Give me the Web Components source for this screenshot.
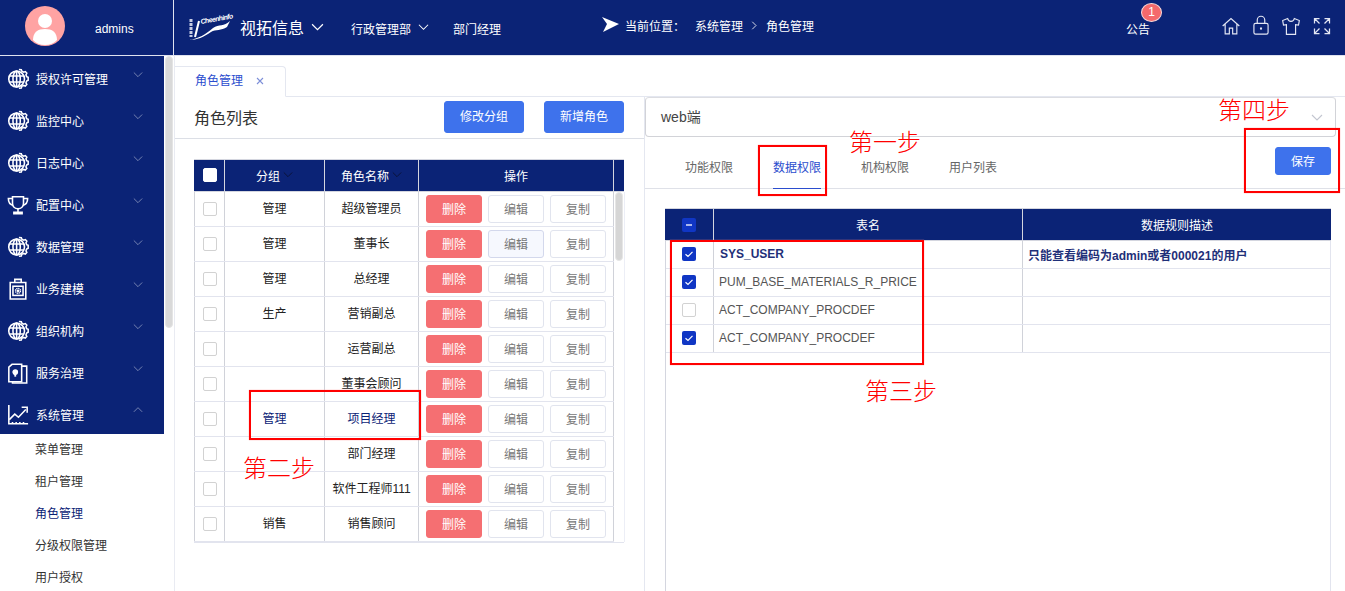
<!DOCTYPE html>
<html lang="zh">
<head>
<meta charset="utf-8">
<title>角色管理</title>
<style>
  html, body { margin: 0; height: 100%; overflow: hidden; background: #fff; }
  body { font: 12px "Liberation Sans", "Noto Sans CJK SC", sans-serif; color: #333; white-space: nowrap; }
</style>
</head>
<body>
<app-shell>
  <app-header slot="header"></app-header>
  <side-nav slot="nav">
    <nav-item icon="globe">授权许可管理</nav-item>
    <nav-item icon="globe">监控中心</nav-item>
    <nav-item icon="globe">日志中心</nav-item>
    <nav-item icon="trophy">配置中心</nav-item>
    <nav-item icon="globe">数据管理</nav-item>
    <nav-item icon="case">业务建模</nav-item>
    <nav-item icon="globe">组织机构</nav-item>
    <nav-item icon="book">服务治理</nav-item>
    <nav-item icon="chart" open>系统管理</nav-item>
    <sub-item>菜单管理</sub-item>
    <sub-item>租户管理</sub-item>
    <sub-item active>角色管理</sub-item>
    <sub-item>分级权限管理</sub-item>
    <sub-item>用户授权</sub-item>
  </side-nav>
  <page-tabs slot="tabs"></page-tabs>
  <role-panel slot="left">
    <role-table>
      <role-row group="管理" name="超级管理员"></role-row>
      <role-row group="管理" name="董事长" hovered></role-row>
      <role-row group="管理" name="总经理"></role-row>
      <role-row group="生产" name="营销副总"></role-row>
      <role-row group="" name="运营副总"></role-row>
      <role-row group="" name="董事会顾问"></role-row>
      <role-row group="管理" name="项目经理" selected></role-row>
      <role-row group="" name="部门经理"></role-row>
      <role-row group="" name="软件工程师111"></role-row>
      <role-row group="销售" name="销售顾问"></role-row>
    </role-table>
  </role-panel>
  <data-panel slot="right">
    <data-row checked strong table="SYS_USER" rule="只能查看编码为admin或者000021的用户"></data-row>
    <data-row checked table="PUM_BASE_MATERIALS_R_PRICE"></data-row>
    <data-row table="ACT_COMPANY_PROCDEF"></data-row>
    <data-row checked table="ACT_COMPANY_PROCDEF"></data-row>
  </data-panel>

  <!-- annotations drawn over the screenshot -->
  <step-box slot="notes" x="758" y="145" w="69" h="51"></step-box>
  <step-box slot="notes" x="249" y="390" w="172" h="50"></step-box>
  <step-box slot="notes" x="670" y="240" w="254" h="125"></step-box>
  <step-box slot="notes" x="1244" y="128" w="96" h="65"></step-box>
  <step-note slot="notes" x="849" y="129">第一步</step-note>
  <step-note slot="notes" x="243" y="455">第二步</step-note>
  <step-note slot="notes" x="865" y="378">第三步</step-note>
  <step-note slot="notes" x="1218" y="97">第四步</step-note>
</app-shell>

<script>
"use strict";

const NAVY = "#0b2376";
const BLUE = "#3e72ec";

// icon bodies, all on a 24x24 box and stroked with currentColor
const ICONS = {
  globe: `<circle cx="10.500" cy="12" r="8.600"/><ellipse cx="10.500" cy="12" rx="4" ry="8.600"/><path d="M2.500 8.700h16M2.500 15.300h16M10.500 3.400v17.200"/>
    <path d="M13 1.600l2.600.2.600 1.800 2 1 1.800-.7 1.600 1.800-.9 1.700.7 2 1.700.8v3.200l-1.700.8-.7 2 .9 1.700-1.600 1.800-1.800-.7-2 1-.6 1.800-2.600.2"/>`,
  trophy: `<path d="M6 3h12v7c0 3.600-2.600 6-6 6s-6-2.400-6-6V3z"/><path d="M6 5H1.500c0 4 1.400 6.500 5 7.500M18 5h4.500c0 4-1.400 6.500-5 7.500M12 16v4M7.500 21.500h9v-1.500h-9z"/>`,
  "case": `<path d="M3.500 5h17v18h-17zM8.500 5V1.500h7V5"/><rect x="6.500" y="9" width="11" height="10"/><circle cx="12" cy="14" r="1.500" fill="currentColor" stroke="none"/><circle cx="12" cy="14" r="2.700" stroke-dasharray="1.400 .7" stroke-width="1.500"/>`,
  book: `<path d="M16 2.500H5.500L2 5.500v16h14z"/><path d="M16 4.500h5.500v18.500H6v-1.500"/><circle cx="9" cy="11" r="2.300" fill="currentColor"/><path d="M9 12v4" stroke-width="2"/>`,
  chart: `<path d="M2 1v20.500h21M6 21.500v-2M10 21.500v-2M14 21.500v-2M18 21.500v-2"/><path d="M2.500 17l6-6 4 3.500 8-8.500"/><path d="M16 3.500h6v6" />`,
  home: `<path d="M2 12L12 3l10 9M5 10v11.500h5v-7h4v7h5V10"/>`,
  lock: `<rect x="3.500" y="10" width="17" height="13" rx="2"/><path d="M7.500 10V6a4.500 4.500 0 0 1 9 0v4"/><path d="M12 15v2.500" stroke-width="2.500"/>`,
  shirt: `<path d="M8 3L2 5.500 3 11l3.500-.5V22h11V10.500L21 11l1-5.500L16 3c-.5 2.500-2 3.500-4 3.500S8.500 5.500 8 3z"/>`,
  expand: `<path d="M3 9V3h6M3 3l6 6M21 9V3h-6M21 3l-6 6M3 15v6h6M3 21l6-6M21 15v6h-6M21 21l-6-6"/>`
};

class UiIcon extends HTMLElement {
  connectedCallback() {
    const size = this.getAttribute("size") || 22;
    this.attachShadow({ mode: "open" }).innerHTML = `
      <style>
        :host { display: inline-flex; flex: none; width: ${size}px; height: ${size}px; }
        svg { width: 100%; height: 100%; fill: none; stroke: currentColor; stroke-width: ${this.getAttribute("weight") || 1.7}; }
      </style>
      <svg viewBox="0 0 24 24">${ICONS[this.getAttribute("name")]}</svg>`;
  }
}

// thin chevron, pointing down unless "up" or "right" is set
class UiChevron extends HTMLElement {
  connectedCallback() {
    const w = +this.getAttribute("size") || 10;
    const d = this.hasAttribute("up") ? "M1 7l5-5 5 5" : this.hasAttribute("right") ? "M3 1l5 5-5 5" : "M1 3l5 5 5-5";
    this.attachShadow({ mode: "open" }).innerHTML = `
      <style>
        :host { display: inline-flex; flex: none; width: ${w}px; height: ${w}px; }
        svg { width: 100%; height: 100%; fill: none; stroke: currentColor; stroke-width: 1.100; }
      </style>
      <svg viewBox="0 0 12 12"><path d="${d}"/></svg>`;
  }
}

class AppShell extends HTMLElement {
  constructor() {
    super();
    this.attachShadow({ mode: "open" }).innerHTML = `
      <style>
        :host { display: block; position: relative; width: 1345px; height: 591px; overflow: hidden; }
        .body { display: flex; height: 535px; }
        .work { flex: 1; display: flex; flex-direction: column; min-width: 0; }
        .panes { flex: 1; display: flex; min-height: 0; }
      </style>
      <slot name="header"></slot>
      <div class="body">
        <slot name="nav"></slot>
        <div class="work">
          <slot name="tabs"></slot>
          <div class="panes">
            <slot name="left"></slot>
            <slot name="right"></slot>
          </div>
        </div>
      </div>
      <slot name="notes"></slot>`;
  }
}

class AppHeader extends HTMLElement {
  constructor() {
    super();
    this.attachShadow({ mode: "open" }).innerHTML = `
      <style>
        :host { display: flex; height: 55px; background: ${NAVY}; color: #fff; border-bottom: 1px solid #dfe2ef; }
        .user { width: 173px; flex: none; display: flex; align-items: center; border-right: 1px solid #dfe2ef; }
        .avatar { width: 40px; height: 40px; margin: 0 30px 4px 25px; flex: none; }
        .user span { padding-top: 2px; }
        .main { flex: 1; display: flex; align-items: center; min-width: 0; }
        .logo { width: 50px; height: 30px; margin: 0 4px 1px 12px; flex: none; }
        .brand { font-size: 16px; padding-bottom: 1px; }
        .dept { margin-left: 27px; }
        .role { margin-left: 24px; }
        .text { padding-top: 1px; }
        ui-chevron { margin-left: 7px; }
        .crumb { display: flex; align-items: center; margin-left: 101px; padding-bottom: 4px; }
        .crumb svg { width: 17px; height: 15px; margin: 0 6px 3px 0; fill: #fff; }
        .crumb b { font-weight: 400; margin-left: 10px; }
        .crumb ui-chevron { margin: 0 7px; }
        .notice { position: relative; margin-left: 312px; padding-top: 1px; }
        .badge { position: absolute; left: 15px; top: -16px; width: 19px; height: 17px; border: 1px solid #fbd9d9; border-radius: 50%;
          background: #f4696c; text-align: center; line-height: 17px; font-size: 12px; }
        .tools { display: flex; align-items: center; gap: 11px; margin-left: 71px; padding-bottom: 3px; color: #e3e6f3; }
        .tools .lock { margin: 0 -1px 2px; }
      </style>
      <div class="user">
        <svg class="avatar" viewBox="0 0 40 40">
          <circle cx="20" cy="20" r="20" fill="#ffa3a3"/>
          <circle cx="20" cy="15" r="7" fill="#fff"/>
          <path d="M8 34c0-8 5-11 12-11s12 3 12 11c-3 3.500-7 5-12 5s-9-1.500-12-5z" fill="#fff"/>
        </svg>
        <span>admins</span>
      </div>
      <div class="main">
        <svg class="logo" viewBox="0 0 50 30">
          <path d="M13 9L9 25" fill="none" stroke="#fff" stroke-width="2"/>
          <path d="M3 28C12 27 20 22 27 16c6-4 11-1 17-7l-3 6c-6 4-11 2-16 5-7 5-14 8-22 8z" fill="#fff"/>
          <text x="15" y="12" transform="rotate(-10 15 12)" fill="#fff" font-family="Liberation Sans" font-size="7" font-weight="700" font-style="italic" textLength="33">Cheenhinfo</text>
          <path d="M5 7v18" stroke="#c6cbe3" stroke-width="3" stroke-dasharray="3 1"/>
        </svg>
        <span class="brand">视拓信息</span>
        <ui-chevron size="13"></ui-chevron>
        <span class="text dept">行政管理部</span>
        <ui-chevron size="11"></ui-chevron>
        <span class="text role">部门经理</span>
        <div class="crumb">
          <svg viewBox="0 0 17 15"><path d="M0 0l17 7L1 15l4-8z"/></svg>
          <span>当前位置：</span><b>系统管理</b>
          <ui-chevron right size="9"></ui-chevron>
          <span>角色管理</span>
        </div>
        <div class="notice">公告<span class="badge">1</span></div>
        <div class="tools">
          <ui-icon name="home" size="20" weight="1.400"></ui-icon>
          <ui-icon class="lock" name="lock" size="20" weight="1.400"></ui-icon>
          <ui-icon name="shirt" size="20" weight="1.400"></ui-icon>
          <ui-icon name="expand" size="20" weight="1.500"></ui-icon>
        </div>
      </div>`;
  }
}

class SideNav extends HTMLElement {
  constructor() {
    super();
    this.attachShadow({ mode: "open" }).innerHTML = `
      <style>
        :host { display: flex; flex: none; width: 174px; border-right: 1px solid #e9ebf2; overflow: hidden; }
        .list { width: 164px; flex: none; }
        .bar { flex: 1; padding: 0 1px; }
        .thumb { height: 272px; background: #d9d9d9; border-radius: 4px; border: 1px solid #e4e4e4; box-sizing: border-box; }
      </style>
      <div class="list"><slot></slot></div>
      <div class="bar"><div class="thumb"></div></div>`;
  }
}

class NavItem extends HTMLElement {
  connectedCallback() {
    const open = this.hasAttribute("open");
    this.attachShadow({ mode: "open" }).innerHTML = `
      <style>
        :host { display: flex; align-items: center; box-sizing: border-box; height: 42px; padding: 4px 0 0 7px; background: ${NAVY}; color: #fff; }
        .label { flex: 1; margin: 0 0 2px 7px; }
        ui-chevron { color: #7e8ab6; margin: 0 21px 8px 0; }
      </style>
      <ui-icon name="${this.getAttribute("icon")}"></ui-icon>
      <span class="label"><slot></slot></span>
      <ui-chevron ${open ? "up" : ""}></ui-chevron>`;
  }
}

class SubItem extends HTMLElement {
  connectedCallback() {
    this.attachShadow({ mode: "open" }).innerHTML = `
      <style>
        :host { display: flex; align-items: center; box-sizing: border-box; height: 32px; padding: 0 0 4px 35px;
          color: ${this.hasAttribute("active") ? NAVY : "#333"}; }
      </style>
      <slot></slot>`;
  }
}

class PageTabs extends HTMLElement {
  constructor() {
    super();
    this.attachShadow({ mode: "open" }).innerHTML = `
      <style>
        :host { display: flex; align-items: flex-end; height: 41px; box-sizing: border-box; padding-top: 10px; border-bottom: 1px solid #e4e7f0; }
        .tab { display: flex; align-items: center; box-sizing: border-box; width: 111px; height: 31px; margin-bottom: -1px; padding: 0 0 4px 20px;
          background: #fff; border: 1px solid #e4e7f0; border-left: 0; border-bottom-color: #fff; border-top-right-radius: 4px; color: #2b4dce; }
        svg { width: 8px; height: 8px; margin: 2px 0 0 13px; stroke: #7d8fd8; stroke-width: 1.100; }
      </style>
      <div class="tab">角色管理<svg viewBox="0 0 8 8"><path d="M1 1l6 6M7 1L1 7"/></svg></div>`;
  }
}

class UiButton extends HTMLElement {
  connectedCallback() {
    const kind = this.getAttribute("kind") || "plain";
    const skins = {
      primary: `background: ${BLUE}; color: #fff; border-color: ${BLUE};`,
      danger: "background: #f56f72; color: #fff; border-color: #f56f72;",
      plain: "background: #fff; color: #777; border-color: #e1e4ee;",
      hover: "background: #f6f8fe; color: #777; border-color: #d3d8ec;"
    };
    this.attachShadow({ mode: "open" }).innerHTML = `
      <style>
        :host { display: inline-flex; align-items: center; justify-content: center; box-sizing: border-box; flex: none; padding-bottom: 2px;
          width: ${this.getAttribute("w") || 56}px; height: ${this.getAttribute("h") || 28}px;
          border: 1px solid; border-radius: 3px; ${skins[kind]} }
      </style>
      <slot></slot>`;
  }
}

class UiCheck extends HTMLElement {
  connectedCallback() {
    const state = this.getAttribute("state") || "off";
    const mark = state === "on"
      ? `<svg viewBox="0 0 14 14"><path d="M3.500 7.200l2.500 2.300 4.500-4.700" fill="none" stroke="#fff" stroke-width="1.200"/></svg>`
      : state === "some" ? `<svg viewBox="0 0 14 14"><path d="M4 7h6" stroke="#dfe4fa" stroke-width="1.500"/></svg>` : "";
    const skin = state === "off" ? "background: #fff; border: 1px solid #d2d2d2;"
      : state === "white" ? "background: #fff; border: 1px solid #fff;"
      : "background: #1036c4; border: 0;";
    this.attachShadow({ mode: "open" }).innerHTML = `
      <style>
        :host { display: block; box-sizing: border-box; width: 14px; height: 14px; border-radius: 2px; ${skin} }
        svg { display: block; width: 14px; height: 14px; }
      </style>${mark}`;
  }
}

class RolePanel extends HTMLElement {
  constructor() {
    super();
    this.attachShadow({ mode: "open" }).innerHTML = `
      <style>
        :host { display: block; flex: none; width: 469px; height: 100%; border-right: 1px solid #e4e7f0; }
        .head { display: flex; align-items: center; gap: 20px; height: 42px; box-sizing: border-box; padding: 0 20px 2px 19px; border-bottom: 1px solid #dcdfe6; }
        h2 { flex: 1; margin: 0; font-size: 16px; font-weight: 400; color: #333; }
        .body { padding: 20px 20px 0 19px; }
      </style>
      <div class="head">
        <h2>角色列表</h2>
        <ui-button kind="primary" w="80" h="32">修改分组</ui-button>
        <ui-button kind="primary" w="80" h="32">新增角色</ui-button>
      </div>
      <div class="body"><slot></slot></div>`;
  }
}

class RoleTable extends HTMLElement {
  constructor() {
    super();
    this.attachShadow({ mode: "open" }).innerHTML = `
      <style>
        :host { display: block; width: 430px; }
        .cols { display: grid; grid-template-columns: 31px 100px 94px 195px 10px; }
        .head { height: 33px; background: ${NAVY}; color: #fff; box-sizing: border-box; border-top: 1px solid #d4d6df; border-bottom: 1px solid #d4d6df; }
        .head > div { display: flex; align-items: center; justify-content: center; border-right: 1px solid #d4d6df; padding-bottom: 1px; }
        .head > div:last-child { border-right: 0; }
        .head > .check { padding-left: 1px; }
        .head ui-chevron { margin-left: 3px; color: #0b1233; }
        .wrap { display: flex; border-bottom: 1px solid #e2e4ee; }
        .rows { width: 420px; flex: none; }
        .bar { flex: 1; padding: 0 1px 0 1px; border-right: 1px solid #eceef6; }
        .thumb { height: 69px; width: 8px; background: #d6d6d6; border: 1px solid #e6e6e6; border-radius: 4px; box-sizing: border-box; }
      </style>
      <div class="cols head">
        <div class="check"><ui-check state="white"></ui-check></div>
        <div>分组<ui-chevron></ui-chevron></div>
        <div>角色名称<ui-chevron></ui-chevron></div>
        <div>操作</div>
        <div></div>
      </div>
      <div class="wrap">
        <div class="rows"><slot></slot></div>
        <div class="bar"><div class="thumb"></div></div>
      </div>`;
  }
}

class RoleRow extends HTMLElement {
  connectedCallback() {
    const color = this.hasAttribute("selected") ? NAVY : "#222";
    const edit = this.hasAttribute("hovered") ? "hover" : "plain";
    this.attachShadow({ mode: "open" }).innerHTML = `
      <style>
        :host { display: grid; grid-template-columns: 31px 100px 94px 195px; height: 35px; box-sizing: border-box;
          border-bottom: 1px solid #e2e4ee; color: ${color}; }
        .cell { display: flex; align-items: center; justify-content: center; border-right: 1px solid #d0d2d9; }
        .text { padding-bottom: 4px; }
        .check { border-left: 1px solid #d0d2d9; padding-left: 1px; }
        .ops { gap: 6px; }
      </style>
      <div class="cell check"><ui-check></ui-check></div>
      <div class="cell text">${this.getAttribute("group")}</div>
      <div class="cell text">${this.getAttribute("name")}</div>
      <div class="cell ops">
        <ui-button kind="danger">删除</ui-button>
        <ui-button kind="${edit}">编辑</ui-button>
        <ui-button>复制</ui-button>
      </div>`;
  }
}

class DataPanel extends HTMLElement {
  constructor() {
    super();
    this.attachShadow({ mode: "open" }).innerHTML = `
      <style>
        :host { display: block; flex: 1; min-width: 0; height: 100%; }
        .select { display: flex; align-items: center; justify-content: space-between; box-sizing: border-box; height: 40px; margin: 0 9px 0 0;
          padding: 0 12px 2px 15px; border: 1px solid #d2d3d8; border-top-color: #dcdde2; border-radius: 4px; font-size: 14px; color: #444; }
        .select ui-chevron { color: #c3c6d0; margin-top: 4px; }
        .tabs { display: flex; align-items: flex-end; height: 52px; box-sizing: border-box; padding: 0 14px 0 40px; border-bottom: 1px solid #dfe1e8; color: #666; }
        .tabs span { box-sizing: border-box; height: 30px; line-height: 19px; margin: 0 40px -1px 0; border-bottom: 1px solid transparent; }
        .tabs .on { color: #2b4dce; border-bottom-color: #2b4dce; }
        .tabs ui-button { align-self: flex-start; margin: 10px 0 0 auto; }
        .body { box-sizing: border-box; height: 402px; margin: 19px 14px 0 20px; border-left: 1px solid #d4d6df; border-right: 1px solid #e2e4ee; }
        .head { display: grid; grid-template-columns: 49px 309px 1fr; height: 33px; background: ${NAVY}; color: #fff;
          border-top: 1px solid #d4d6df; border-bottom: 1px solid #d4d6df; box-sizing: border-box; margin: 0 -1px; }
        .head > div { display: flex; align-items: center; justify-content: center; border-right: 1px solid #d4d6df; }
        .head > div:last-child { border-right: 0; }
      </style>
      <div class="select">web端<ui-chevron size="12"></ui-chevron></div>
      <div class="tabs">
        <span>功能权限</span><span class="on">数据权限</span><span>机构权限</span><span>用户列表</span>
        <ui-button kind="primary">保存</ui-button>
      </div>
      <div class="body">
        <div class="head">
          <div><ui-check state="some"></ui-check></div>
          <div>表名</div>
          <div>数据规则描述</div>
        </div>
        <slot></slot>
      </div>`;
  }
}

class DataRow extends HTMLElement {
  connectedCallback() {
    const strong = this.hasAttribute("strong");
    this.attachShadow({ mode: "open" }).innerHTML = `
      <style>
        :host { display: grid; grid-template-columns: 48px 309px 1fr; height: 28px; box-sizing: border-box; border-bottom: 1px solid #e2e4ee; color: #555; }
        .cell { display: flex; align-items: center; padding: 0 0 1px 5px; border-right: 1px solid #d0d2d9; }
        .check { justify-content: center; padding: 0 1px 1px 0; }
        .rule { border-right: 0; font-weight: 700; color: #1f3079; }
        .name { ${strong ? `font-weight: 700; margin-left: 1px; color: #1f3079;` : ""} }
      </style>
      <div class="cell check"><ui-check state="${this.hasAttribute("checked") ? "on" : "off"}"></ui-check></div>
      <div class="cell"><span class="name">${this.getAttribute("table")}</span></div>
      <div class="cell rule">${this.getAttribute("rule") || ""}</div>`;
  }
}

// red marker rectangle, its place on the picture is the content
class StepBox extends HTMLElement {
  connectedCallback() {
    const a = n => this.getAttribute(n);
    this.attachShadow({ mode: "open" }).innerHTML = `
      <style>
        :host { position: absolute; left: ${a("x")}px; top: ${a("y")}px; width: ${a("w")}px; height: ${a("h")}px;
          box-sizing: border-box; border: 2px solid #f00; box-shadow: 0 0 1px #ff8a8a; }
      </style>`;
  }
}

class StepNote extends HTMLElement {
  connectedCallback() {
    this.attachShadow({ mode: "open" }).innerHTML = `
      <style>
        :host { position: absolute; left: ${this.getAttribute("x")}px; top: ${this.getAttribute("y")}px;
          font: 300 24px/24px "Noto Sans CJK SC", sans-serif; color: #f00; white-space: nowrap; }
      </style>
      <slot></slot>`;
  }
}

customElements.define("ui-icon", UiIcon);
customElements.define("ui-chevron", UiChevron);
customElements.define("ui-button", UiButton);
customElements.define("ui-check", UiCheck);
customElements.define("app-shell", AppShell);
customElements.define("app-header", AppHeader);
customElements.define("side-nav", SideNav);
customElements.define("nav-item", NavItem);
customElements.define("sub-item", SubItem);
customElements.define("page-tabs", PageTabs);
customElements.define("role-panel", RolePanel);
customElements.define("role-table", RoleTable);
customElements.define("role-row", RoleRow);
customElements.define("data-panel", DataPanel);
customElements.define("data-row", DataRow);
customElements.define("step-box", StepBox);
customElements.define("step-note", StepNote);
</script>
</body>
</html>
